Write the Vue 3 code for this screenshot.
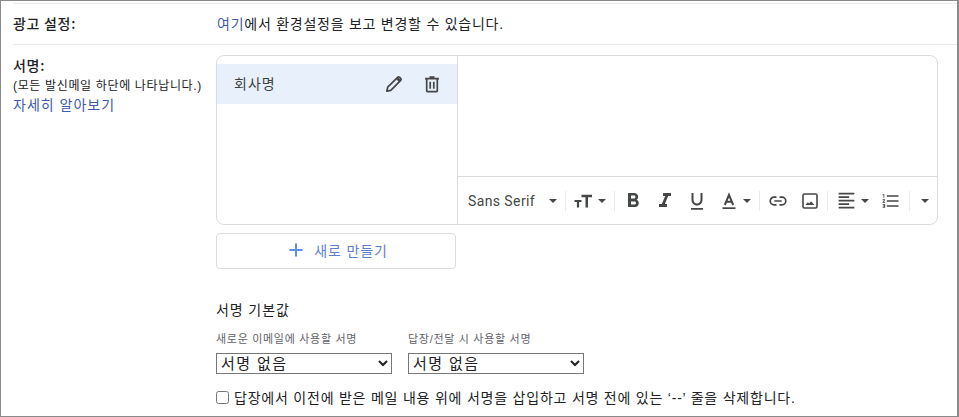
<script setup>
import { ref } from "vue";

const replyDefault = ref("none");
const newDefault = ref("none");
const insertBefore = ref(false);
</script>

<template>
  <div class="frame">
    <div class="row ad-row">
      <div class="label"><b>광고 설정:</b></div>
      <div class="value"><a class="link">여기</a>에서 환경설정을 보고 변경할 수 있습니다.</div>
    </div>

    <div class="row sign-row">
      <div class="label">
        <b class="sign-title">서명:</b>
        <div class="hint">(모든 발신메일 하단에 나타납니다.)</div>
        <a class="link learn">자세히 알아보기</a>
      </div>

      <div class="sign-body">
        <div class="editor">
          <div class="list">
            <div class="item">
              <span class="item-name">회사명</span>
              <svg class="item-icon pencil" viewBox="0 0 20 20" width="20" height="20">
                <path d="M2.800 17.200l.9-4L13.600 3.300a1.500 1.500 0 0 1 2.100 0l1 1a1.500 1.500 0 0 1 0 2.100L6.800 16.300z" fill="none" stroke="#444746" stroke-width="1.700" stroke-linejoin="round"/>
                <path d="M12 4.900l3.100 3.100 1.900-1.900-3.100-3.100z" fill="#444746"/>
              </svg>
              <svg class="item-icon" viewBox="0 0 20 20" width="20" height="20">
                <path d="M4.700 5.500v11.200a1 1 0 0 0 1 1h8.600a1 1 0 0 0 1-1V5.500M3 4.700h14M7.500 3h5M8.200 7.800v7M11.800 7.800v7" fill="none" stroke="#444746" stroke-width="1.700"/>
              </svg>
            </div>
          </div>
          <div class="compose">
            <div class="text-area"></div>
            <div class="toolbar">
              <span class="font-name">Sans Serif</span>
              <span class="caret font-caret"></span>
              <span class="sep"></span>
              <span class="size-btn">
                <svg viewBox="0 0 20 20" width="20" height="20">
                  <path d="M.5 9h7v2H5.100v5.500H2.900V11H.5zM7.500 3.800H18v2.400h-4v10.300h-2.500V6.200h-4z" fill="#444746"/>
                </svg>
                <span class="caret"></span>
              </span>
              <span class="sep sep-tools"></span>
              <svg class="tool-lg" viewBox="0 0 24 24" width="24" height="24">
                <path d="M15.600 10.790c.97-.67 1.650-1.770 1.650-2.790 0-2.260-1.750-4-4-4H7v14h7.040c2.090 0 3.710-1.700 3.710-3.790 0-1.520-.86-2.820-2.150-3.420zM10 6.500h3c.83 0 1.500.67 1.500 1.500s-.67 1.500-1.500 1.500h-3v-3zm3.500 9H10v-3h3.500c.83 0 1.500.67 1.500 1.500s-.67 1.500-1.500 1.500z" fill="#444746"/>
              </svg>
              <svg class="tool-lg" viewBox="0 0 24 24" width="24" height="24">
                <path d="M10 4v3h2.210l-3.420 8H6v3h8v-3h-2.210l3.420-8H18V4z" fill="#444746"/>
              </svg>
              <svg class="tool-lg" viewBox="0 0 24 24" width="24" height="24">
                <path d="M12 16.500c3.050 0 5.500-2.450 5.500-5.500V4h-2v7c0 1.930-1.570 3.500-3.500 3.500S8.500 12.930 8.500 11V4h-2v7c0 3.050 2.450 5.500 5.500 5.500zM6 19v1.800h12V19H6z" fill="#444746"/>
              </svg>
              <span class="color-btn">
                <svg viewBox="0 0 20 20" width="20" height="20">
                  <path d="M5.800 14 10 3.800 14.200 14M7.200 10.800h5.600" fill="none" stroke="#444746" stroke-width="2"/>
                  <path d="M3.500 16.300h13v1.700h-13z" fill="#444746"/>
                </svg>
                <span class="caret"></span>
              </span>
              <span class="sep sep-insert"></span>
              <svg class="tool" viewBox="0 0 20 20" width="20" height="20">
                <path d="M8.500 6.200H6a3.800 3.800 0 0 0 0 7.600h2.500M11.500 6.200H14a3.800 3.800 0 0 1 0 7.600h-2.500M6.300 10h7.400" fill="none" stroke="#444746" stroke-width="1.700"/>
              </svg>
              <svg class="tool" viewBox="0 0 20 20" width="20" height="20">
                <rect x="3" y="3" width="14" height="14" rx="1.500" fill="none" stroke="#444746" stroke-width="1.600"/>
                <path d="M5.500 14l2.300-2.800 1.400 1.400 1.800-2.400 3.500 3.800z" fill="#444746"/>
              </svg>
              <span class="sep sep-align"></span>
              <span class="align-btn">
                <svg viewBox="0 0 24 24" width="21" height="21">
                  <path d="M15 15H3v2h12v-2zm0-8H3v2h12V7zM3 13h18v-2H3v2zm0 8h18v-2H3v2zM3 3v2h18V3H3z" fill="#444746"/>
                </svg>
                <span class="caret"></span>
              </span>
              <svg class="tool list-tool" viewBox="0 0 24 24" width="20" height="20">
                <path d="M2 17h2v.5H3v1h1v.5H2v1h3v-4H2v1zm1-9h1V4H2v1h1v3zm-1 3h1.800L2 13.100v.9h3v-1H3.200L5 10.900V10H2v1zm5-6v2h14V5H7zm0 14h14v-2H7v2zm0-6h14v-2H7v2z" fill="#444746"/>
              </svg>
              <span class="sep sep-more"></span>
              <span class="caret"></span>
            </div>
          </div>
        </div>

        <button class="create" type="button">
          <svg viewBox="0 0 20 20" width="20" height="20">
            <path d="M10 3.500v13M3.500 10h13" fill="none" stroke="#5e8ee8" stroke-width="2"/>
          </svg>
          <span class="create-text">새로 만들기</span>
        </button>

        <div class="defaults-title">서명 기본값</div>
        <div class="defaults">
          <label class="pick">
            <span class="pick-label">새로운 이메일에 사용할 서명</span>
            <select v-model="newDefault">
              <option value="none">서명 없음</option>
              <option value="company">회사명</option>
            </select>
          </label>
          <label class="pick">
            <span class="pick-label">답장/전달 시 사용할 서명</span>
            <select v-model="replyDefault">
              <option value="none">서명 없음</option>
              <option value="company">회사명</option>
            </select>
          </label>
        </div>
        <label class="check">
          <input v-model="insertBefore" type="checkbox" />
          <span>답장에서 이전에 받은 메일 내용 위에 서명을 삽입하고 서명 전에 있는 ‘--’ 줄을 삭제합니다.</span>
        </label>
      </div>
    </div>
  </div>
</template>

<style>
html, body {
  margin: 0;
  background: #fff;
}
</style>

<style scoped>
.frame {
  box-sizing: border-box;
  width: 959px;
  height: 417px;
  border: 1px solid #8a8a8a;
  border-right-width: 2px;
  padding: 2px 0 0 12px;
  overflow: hidden;
  font-family: "Liberation Sans", "Noto Sans CJK KR", sans-serif;
  font-size: 14px;
  letter-spacing: .7px;
  color: #202124;
}
.row {
  display: flex;
}
.ad-row {
  height: 38px;
  padding-bottom: 2px;
  align-items: center;
  border-top: 1px solid #e8eaed;
  border-bottom: 1px solid #e8eaed;
}
.label {
  width: 203px;
  flex: none;
}
.label b {
  font-family: "Noto Sans CJK KR", sans-serif;
  font-weight: 500;
}
.value {
  margin-left: 1px;
  letter-spacing: .75px;
}
.link {
  color: #3c5ba8;
}
.sign-row {
  padding-top: 10px;
}
.sign-row .label {
  line-height: 18px;
}
.sign-title {
  display: block;
  margin-top: 1px;
}
.hint {
  font-size: 12px;
  letter-spacing: .65px;
  line-height: 20px;
  margin-top: 2px;
}
.learn {
  display: block;
  letter-spacing: 1px;
}
.sign-body {
  width: 722px;
  flex: none;
}
.editor {
  display: flex;
  box-sizing: border-box;
  height: 170px;
  border: 1px solid #dadce0;
  border-radius: 8px;
}
.list {
  width: 240px;
  flex: none;
  padding-top: 8px;
  border-right: 1px solid #dadce0;
}
.item {
  display: flex;
  align-items: center;
  height: 40px;
  padding: 0 15px 0 17px;
  background: #e8f0fb;
}
.item-name {
  flex: 1;
  padding-bottom: 2px;
  color: #3c4043;
  letter-spacing: 1px;
}
.item-icon {
  margin-left: 18px;
}
.compose {
  flex: 1;
  display: flex;
  flex-direction: column;
}
.text-area {
  height: 120px;
  border-bottom: 1px solid #dadce0;
}
.toolbar {
  flex: 1;
  display: flex;
  align-items: center;
  padding-left: 10px;
  color: #444746;
}
.font-name {
  font-family: Roboto, sans-serif;
  letter-spacing: .4px;
  width: 81px;
}
.caret {
  display: inline-block;
  flex: none;
  width: 0;
  height: 0;
  border-left: 4px solid transparent;
  border-right: 4px solid transparent;
  border-top: 4px solid #444746;
}
.font-caret {
  margin-right: 8px;
}
.sep {
  flex: none;
  width: 1px;
  height: 20px;
  background: #e8eaed;
}
.size-btn {
  display: flex;
  align-items: center;
  gap: 4px;
  margin-left: 8px;
}
.sep-tools {
  margin: 0 2px 0 8px;
}
.tool {
  flex: none;
  margin: 0 6px;
}
.tool-lg {
  flex: none;
  margin: 0 4px;
}
.color-btn {
  display: flex;
  align-items: center;
  gap: 4px;
  margin-left: 6px;
}
.sep-insert {
  margin: 0 2px 0 8px;
}
.sep-align {
  margin: 0 8px 0 1px;
}
.align-btn {
  display: flex;
  align-items: center;
  gap: 4px;
}
.list-tool {
  margin-left: 12px;
}
.sep-more {
  margin: 0 11px 0 2px;
}
.create {
  display: flex;
  align-items: center;
  justify-content: center;
  gap: 8px;
  box-sizing: border-box;
  width: 240px;
  height: 36px;
  margin-top: 8px;
  padding: 0 0 2px 2px;
  border: 1px solid #dadce0;
  border-radius: 4px;
  background: #fff;
  color: #5e7fd0;
  font: inherit;
  letter-spacing: .9px;
}
.defaults-title {
  margin-top: 32px;
  line-height: 18px;
  letter-spacing: .9px;
}
.defaults {
  display: flex;
  gap: 16px;
  margin-top: 13px;
}
.pick {
  display: flex;
  flex-direction: column;
}
.pick-label {
  font-size: 11px;
  letter-spacing: .7px;
  line-height: 14px;
  color: #5f6368;
  margin-bottom: 7px;
}
select {
  box-sizing: border-box;
  width: 176px;
  height: 21px;
  font: inherit;
  font-size: 15px;
  letter-spacing: 1.4px;
  color: #202124;
  background: #fff;
}
.check {
  display: flex;
  align-items: center;
  margin-top: 13px;
  letter-spacing: .78px;
  white-space: nowrap;
}
.check input {
  width: 13px;
  height: 13px;
  margin: 0 5px 0 0;
}
</style>
